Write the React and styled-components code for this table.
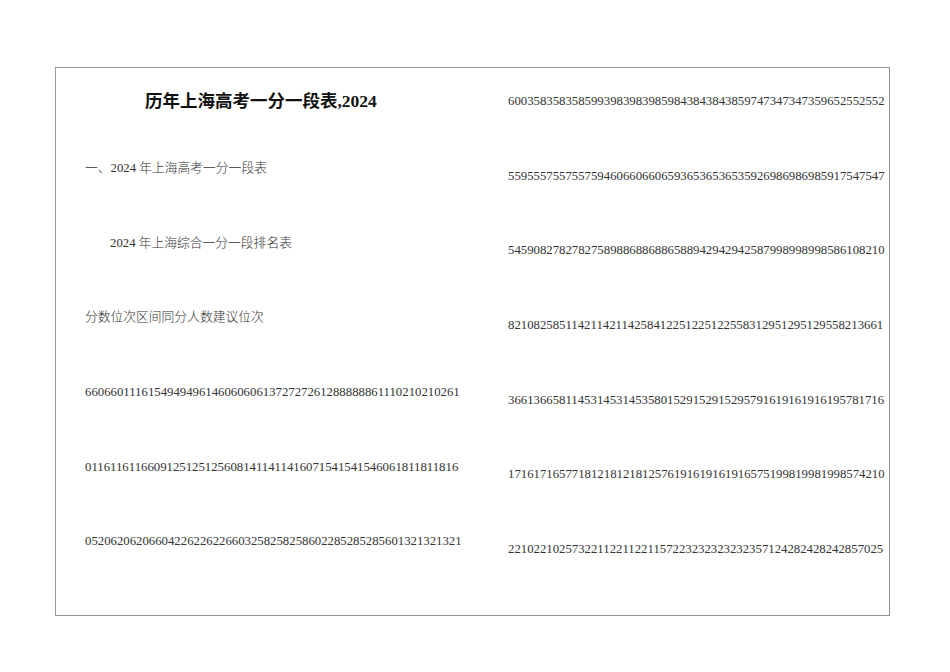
import React from "react";
import styled, { createGlobalStyle } from "styled-components";

const GlobalStyle = createGlobalStyle`
  html, body {
    margin: 0;
    padding: 0;
    background: #ffffff;
  }
`;

const leftRows = [
  "66066011161549494961460606061372727261288888861110210210261",
  "01161161166091251251256081411411416071541541546061811811816",
  "05206206206604226226226603258258258602285285285601321321321",
];

const rightRows = [
  "60035835835859939839839859843843843859747347347359652552552",
  "55955575575575946066066065936536536535926986986985917547547",
  "54590827827827589886886886588942942942587998998998586108210",
  "82108258511421142114258412251225122558312951295129558213661",
  "36613665811453145314535801529152915295791619161916195781716",
  "17161716577181218121812576191619161916575199819981998574210",
  "22102210257322112211221157223232323232357124282428242857025",
];

const App = () => {
  return (
    <>
      <GlobalStyle />
      <Page>
        <Sheet>
          <Column>
            <Title>历年上海高考一分一段表,2024</Title>
            <Rows>
              <Line>一、2024 年上海高考一分一段表</Line>
              <Line indent>2024 年上海综合一分一段排名表</Line>
              <Line>分数位次区间同分人数建议位次</Line>
              {leftRows.map((row, index) => (
                <Line key={index}>{row}</Line>
              ))}
            </Rows>
          </Column>

          <Column right>
            <Rows>
              {rightRows.map((row, index) => (
                <Line key={index}>{row}</Line>
              ))}
            </Rows>
          </Column>
        </Sheet>
      </Page>
    </>
  );
};

const Page = styled.div`
  width: 950px;
  height: 672px;
  padding: 67px 0 0 55px;
  box-sizing: border-box;
`;

const Sheet = styled.div`
  width: 835px;
  height: 549px;
  box-sizing: border-box;
  border: 1px solid #9a9a9a;
  border-right-color: #8c8c8c;
  border-bottom-color: #8c8c8c;
  display: grid;
  grid-template-columns: 423px 1fr;
  padding: 0 0 0 29px;
  font-family: "Liberation Serif", "Noto Sans CJK SC", serif;
`;

const Column = styled.div`
  display: flex;
  flex-direction: column;
  padding-top: ${(p) => (p.right ? "23px" : "21px")};
`;

const Title = styled.h1`
  margin: 0 0 45px 60px;
  height: 24px;
  line-height: 24px;
  font-size: 17.5px;
  font-weight: bold;
  color: #111;
  white-space: nowrap;
`;

const Rows = styled.div`
  display: flex;
  flex-direction: column;
  gap: 54.7px;
`;

const Line = styled.div`
  height: 20px;
  line-height: 20px;
  font-size: 12.78px;
  font-weight: 300;
  color: #333;
  white-space: nowrap;
  padding-left: ${(p) => (p.indent ? "25px" : "0")};
`;

export default App;
